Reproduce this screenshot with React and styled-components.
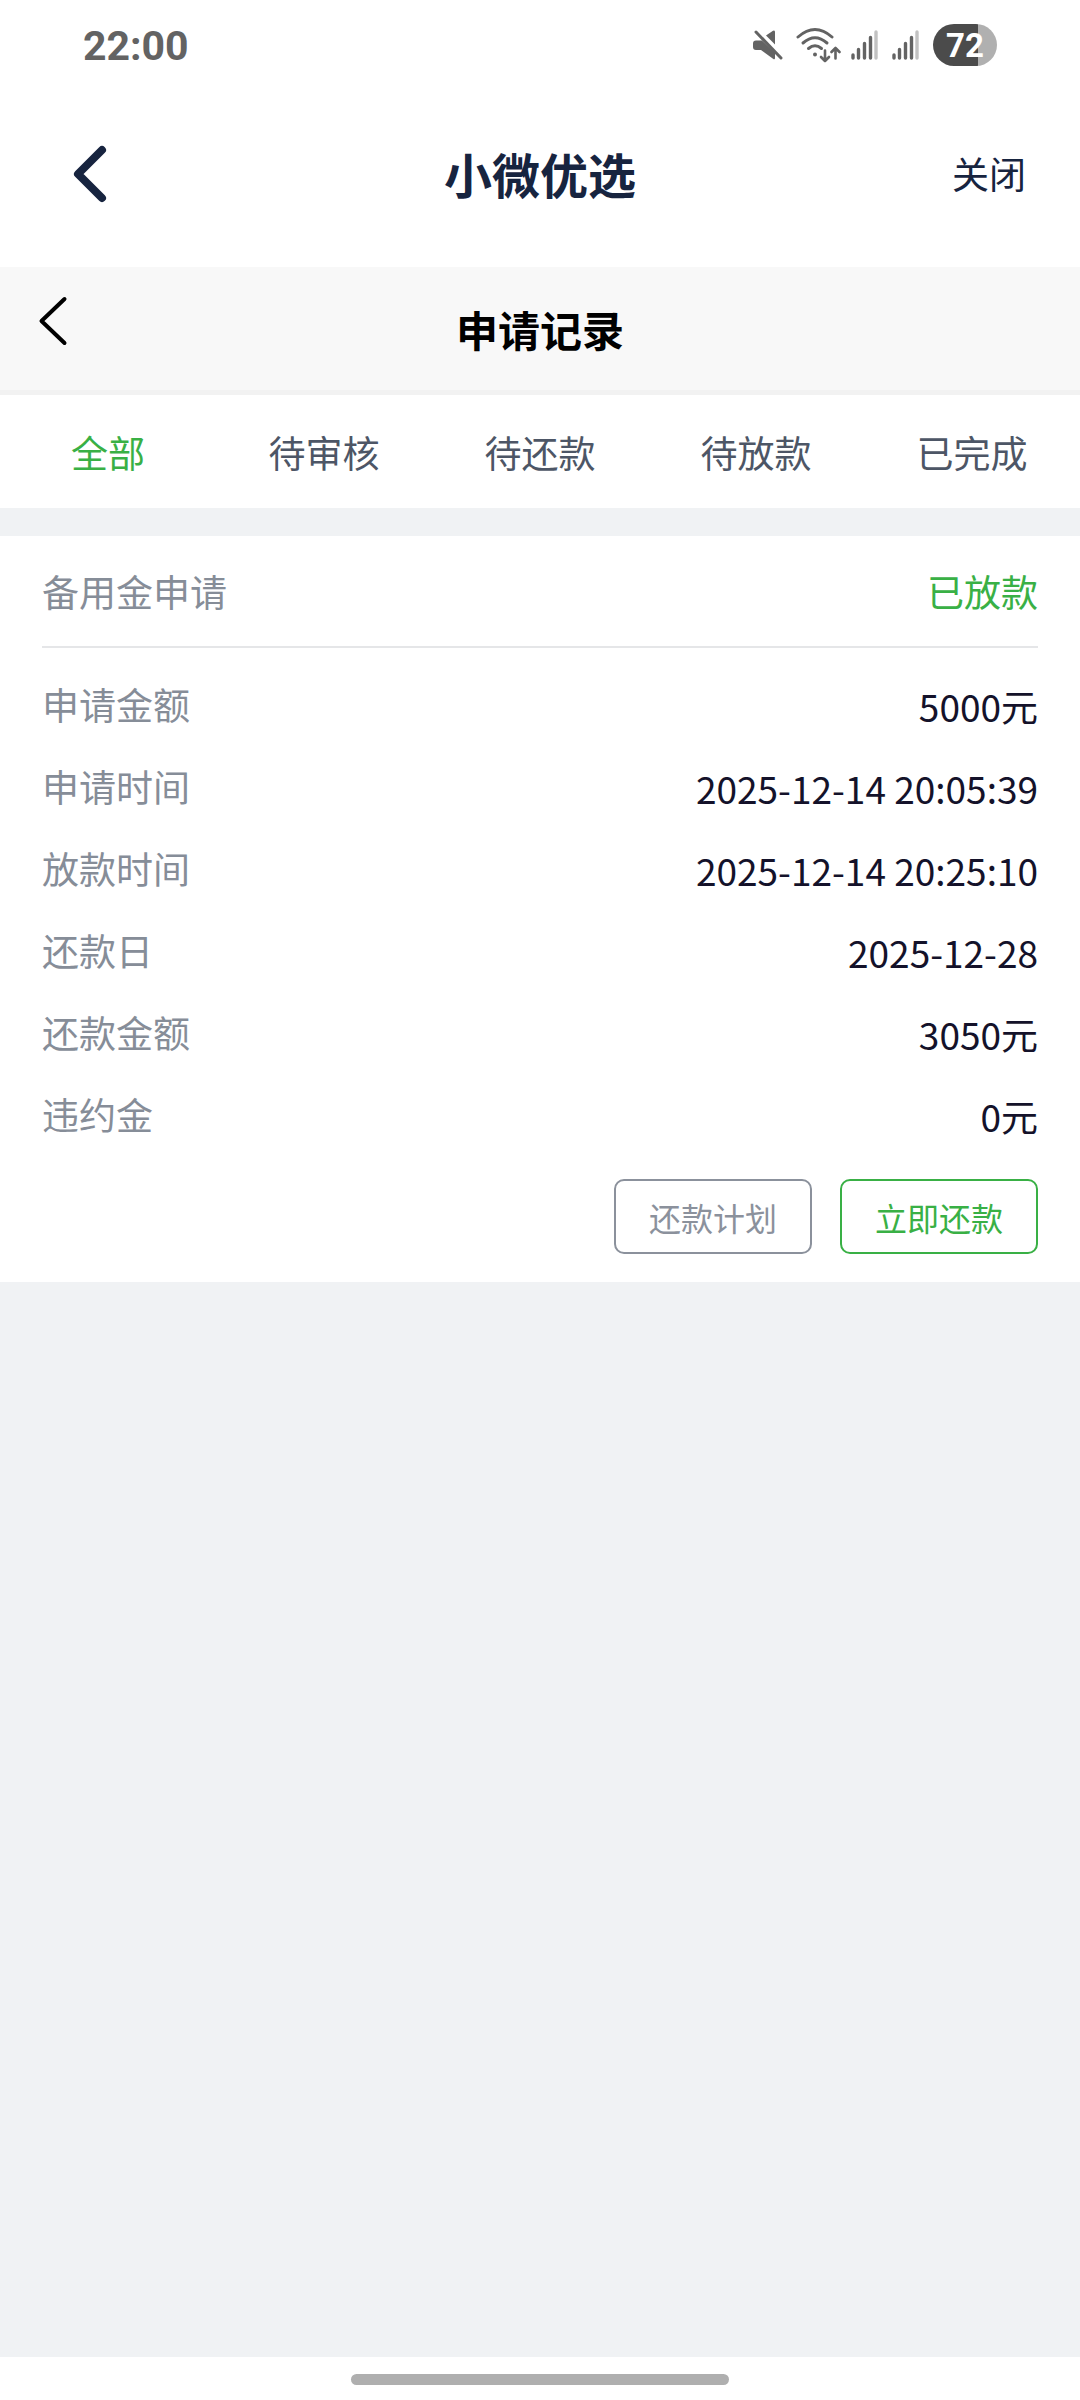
import React, { useState } from "react";
import styled, { createGlobalStyle } from "styled-components";

const GlobalStyle = createGlobalStyle`
  *, *::before, *::after { box-sizing: border-box; }
  body {
    margin: 0;
    background: #f0f2f4;
    font-family: "Noto Sans CJK SC", "Noto Sans", sans-serif;
  }
  button {
    margin: 0;
    padding: 0;
    border: 0;
    background: none;
    color: inherit;
    font: inherit;
    cursor: pointer;
  }
  svg { display: block; }
`;

const Page = styled.div`
  display: flex;
  flex-direction: column;
  min-height: 100vh;
`;

const StatusBar = styled.div`
  display: flex;
  align-items: center;
  justify-content: space-between;
  height: 90px;
  padding: 0 83px;
  background: #fff;
  color: #636363;
`;

const Clock = styled.time`
  padding-top: 2px;
  font: 700 41px/48px Roboto, sans-serif;
`;

const StatusIcons = styled.div`
  display: flex;
  align-items: center;
  gap: 10px;
`;

const Battery = styled.div`
  width: 64px;
  height: 42px;
  border-radius: 21px;
  background: linear-gradient(to right, #4b4b4b 70%, #b0b0b0 70%);
  color: #fff;
  font: 700 33px/44px Roboto, sans-serif;
  text-align: center;
`;

const AppHeader = styled.header`
  display: grid;
  grid-template-columns: 1fr auto 1fr;
  align-items: center;
  height: 177px;
  padding: 0 54px 12px;
  background: #fff;
  color: #17243f;
`;

const AppTitle = styled.div`
  font-size: 48px;
  line-height: 64px;
  font-weight: 700;
`;

const BackButton = styled.button`
  justify-self: start;
`;

const CloseButton = styled.button`
  justify-self: end;
  font-size: 37px;
  line-height: 54px;
`;

const PageHeader = styled.div`
  display: grid;
  grid-template-columns: 1fr auto 1fr;
  align-items: center;
  height: 128px;
  padding: 0 32px;
  border-bottom: 5px solid #f2f2f2;
  background: #f8f8f8;
  color: #000;
`;

const PageTitle = styled.h1`
  margin: 0;
  font-size: 42px;
  line-height: 64px;
  font-weight: 700;
`;

const PageBack = styled(BackButton)`
  padding-bottom: 16px;
`;

const Tabs = styled.nav`
  display: grid;
  grid-template-columns: repeat(5, 1fr);
  height: 113px;
  background: #fff;
`;

const Tab = styled.button`
  color: ${(p) => (p.$active ? "#39b045" : "#4d5666")};
  font-size: 37px;
  line-height: 54px;
`;

const Content = styled.main`
  flex: 1;
  padding-top: 28px;
`;

const Card = styled.article`
  padding: 0 42px 28px;
  background: #fff;
`;

const CardHeader = styled.div`
  display: flex;
  align-items: center;
  justify-content: space-between;
  height: 112px;
  border-bottom: 2px solid #e5e6e8;
  color: #868d98;
  font-size: 37px;
  line-height: 54px;
`;

const CardTitle = styled.h2`
  margin: 0;
  font: inherit;
`;

const CardStatus = styled.span`
  color: #39b045;
`;

const Details = styled.dl`
  display: grid;
  gap: 24px;
  margin: 0;
  padding: 29px 0 34px;
`;

const DetailRow = styled.div`
  display: flex;
  justify-content: space-between;
  font-size: 37px;
`;

const Label = styled.dt`
  color: #868d98;
  line-height: 54px;
`;

const Value = styled.dd`
  margin: 0;
  color: #14122a;
  line-height: 58px;
`;

const Actions = styled.div`
  display: flex;
  justify-content: flex-end;
  gap: 28px;
`;

const ActionButton = styled.button`
  width: 198px;
  height: 75px;
  border: 2px solid currentColor;
  border-radius: 10px;
  color: ${(p) => (p.$primary ? "#39b045" : "#8b919c")};
  font-size: 32px;
  line-height: 48px;
`;

const NavigationBar = styled.footer`
  display: flex;
  justify-content: center;
  height: 43px;
  padding-top: 17px;
  background: #fff;
`;

const HomeHandle = styled.div`
  width: 35%;
  height: 11px;
  border-radius: 6px;
  background: #afafaf;
`;

function MutedIcon() {
  return (
    <svg width="32" height="32" viewBox="0 0 32 32" aria-hidden="true">
      <g fill="#636363">
        <path d="M13 6.500L20 1.800Q22 .8 22 3V15.500Z" />
        <path d="M0 14.500Q0 11.500 3 11.500H9L22 24V29Q22 31.200 20 29.800L8 21H3Q0 21 0 18Z" />
      </g>
      <path d="M3 3L28 29" stroke="#636363" strokeWidth="3" strokeLinecap="round" />
    </svg>
  );
}

function WifiIcon() {
  return (
    <svg width="46" height="36" viewBox="0 0 46 36" fill="none" stroke="#636363" strokeLinecap="round" strokeLinejoin="round" aria-hidden="true">
      <g strokeWidth="3">
        <path d="M3 10Q20-5 37 10" />
        <path d="M8 16Q20 5.500 32 16" />
        <path d="M13.500 21.500Q20 16 26.500 21.500" />
      </g>
      <circle cx="20" cy="27.500" r="2" fill="#636363" stroke="none" />
      <g strokeWidth="2.600">
        <path d="M30 23.500V34M26 30L30 34L34 30" />
        <path d="M40.500 31.500V21M36.500 25L40.500 21L44.500 25" />
      </g>
    </svg>
  );
}

function SignalIcon() {
  return (
    <svg width="31" height="30" viewBox="0 0 31 30" stroke="#636363" strokeWidth="3.400" strokeLinecap="round" aria-hidden="true">
      <path d="M2 25V28M7.500 19.500V28M13.500 13.500V28M19.500 7.500V28" />
      <path d="M25 2V28" stroke="#c2c2c2" />
    </svg>
  );
}

const tabs = ["全部", "待审核", "待还款", "待放款", "已完成"];

const details = [
  ["申请金额", "5000元"],
  ["申请时间", "2025-12-14 20:05:39"],
  ["放款时间", "2025-12-14 20:25:10"],
  ["还款日", "2025-12-28"],
  ["还款金额", "3050元"],
  ["违约金", "0元"],
];

export default function App() {
  const [active, setActive] = useState(tabs[0]);

  return (
    <Page lang="zh-CN">
      <GlobalStyle />
      <StatusBar>
        <Clock>22:00</Clock>
        <StatusIcons>
          <MutedIcon />
          <WifiIcon />
          <SignalIcon />
          <SignalIcon />
          <Battery>72</Battery>
        </StatusIcons>
      </StatusBar>

      <AppHeader>
        <BackButton type="button" aria-label="返回">
          <svg width="58" height="60" viewBox="0 0 58 60" fill="none" stroke="currentColor" strokeWidth="8" strokeLinecap="round" strokeLinejoin="round">
            <path d="M48 7L24 31L48 55" />
          </svg>
        </BackButton>
        <AppTitle>小微优选</AppTitle>
        <CloseButton type="button">关闭</CloseButton>
      </AppHeader>

      <PageHeader>
        <PageBack type="button" aria-label="返回">
          <svg width="40" height="52" viewBox="0 0 40 52" fill="none" stroke="currentColor" strokeWidth="4" strokeLinecap="round" strokeLinejoin="round">
            <path d="M32.500 4L9.500 26L32.500 48" />
          </svg>
        </PageBack>
        <PageTitle>申请记录</PageTitle>
      </PageHeader>

      <Tabs>
        {tabs.map((name) => (
          <Tab key={name} type="button" $active={name === active} onClick={() => setActive(name)}>
            {name}
          </Tab>
        ))}
      </Tabs>

      <Content>
        <Card>
          <CardHeader>
            <CardTitle>备用金申请</CardTitle>
            <CardStatus>已放款</CardStatus>
          </CardHeader>
          <Details>
            {details.map(([label, value]) => (
              <DetailRow key={label}>
                <Label>{label}</Label>
                <Value>{value}</Value>
              </DetailRow>
            ))}
          </Details>
          <Actions>
            <ActionButton type="button">还款计划</ActionButton>
            <ActionButton type="button" $primary>立即还款</ActionButton>
          </Actions>
        </Card>
      </Content>

      <NavigationBar>
        <HomeHandle />
      </NavigationBar>
    </Page>
  );
}
